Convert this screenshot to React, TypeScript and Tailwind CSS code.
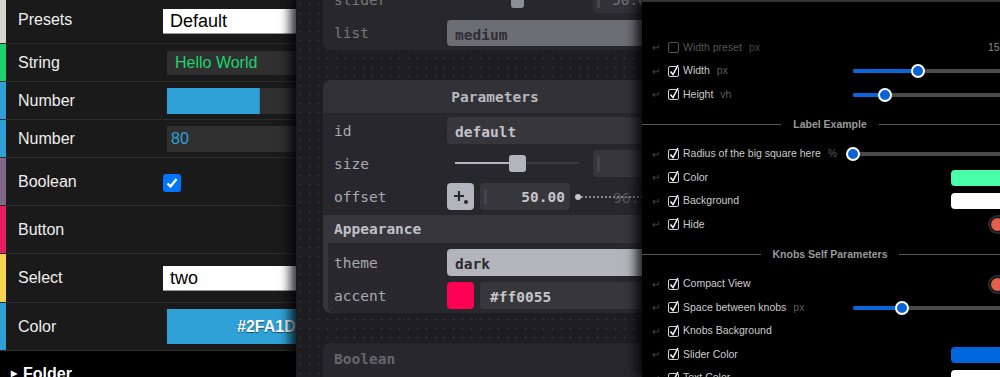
import React from "react";

function GuiRow(props: {
	strip: string;
	h: string;
	label: string;
	children?: React.ReactNode;
	extra?: string;
}) {
	return (
		<div className={`flex items-center border-b border-[#2c2c2c] ${props.h} ${props.extra ?? ""}`}>
			<div className={`self-stretch w-[6px] shrink-0 ${props.strip}`} />
			<div className="w-[157px] shrink-0 pl-[12px] text-[16px] text-[#eeeeee]">{props.label}</div>
			<div className="flex-1 flex items-center">{props.children}</div>
		</div>
	);
}

function DatGui() {
	return (
		<div className="w-[296px] shrink-0 h-full bg-[#1a1a1a] overflow-hidden font-['Liberation_Sans',Arial,sans-serif]">
			<GuiRow strip="bg-[#d6d6ce]" h="h-[47px]" extra="-mt-[3px]" label="Presets">
				<div className="w-[200px] h-[25px] mt-[2px] bg-white border-b border-[#999] pl-[7px] text-[18px] leading-[25px] text-black">
					Default
				</div>
			</GuiRow>
			<GuiRow strip="bg-[#1ed36f]" h="h-[38px]" label="String">
				<div className="ml-[4px] w-[200px] h-[24px] bg-[#303030] pl-[8px] text-[16px] leading-[24px] text-[#1ed36f]">
					Hello World
				</div>
			</GuiRow>
			<GuiRow strip="bg-[#2fa1d6]" h="h-[38px]" label="Number">
				<div className="ml-[4px] w-[200px] h-[26px] bg-[#303030] flex">
					<div className="w-[93px] h-full bg-[#2fa1d6] border-r border-[#2a89b8]" />
				</div>
			</GuiRow>
			<GuiRow strip="bg-[#2fa1d6]" h="h-[38px]" label="Number">
				<div className="ml-[4px] w-[200px] h-[26px] bg-[#303030] pl-[4px] text-[16px] leading-[26px] text-[#2fa1d6]">
					80
				</div>
			</GuiRow>
			<GuiRow strip="bg-[#806787]" h="h-[48px]" label="Boolean">
				<div className="w-[18px] h-[18px] mt-[2px] rounded-[3px] bg-[#0075ff] flex items-center justify-center">
					<svg width="14" height="14" viewBox="0 0 14 14">
						<path d="M2.5 7.5 L5.5 10.5 L11.5 3" fill="none" stroke="white" strokeWidth="2.4" />
					</svg>
				</div>
			</GuiRow>
			<GuiRow strip="bg-[#e61d5f]" h="h-[48px]" label="Button" />
			<GuiRow strip="bg-[#f4d450]" h="h-[49px]" label="Select">
				<div className="w-[200px] h-[25px] bg-white border-b border-[#999] pl-[7px] text-[18px] leading-[25px] text-black">
					two
				</div>
			</GuiRow>
			<GuiRow strip="bg-[#2fa1d6]" h="h-[48px]" label="Color">
				<div className="ml-[4px] w-[200px] h-[35px] bg-[#2fa1d6] pl-[70px] text-[16px] leading-[35px] font-bold text-white [text-shadow:0_1px_1px_rgba(0,0,0,0.5)]">
					#2FA1D6
				</div>
			</GuiRow>
			<div className="bg-black h-[40px] flex items-center pl-[11px] pt-[5px] text-[16px] font-bold text-white">
				<span className="text-[8px] mr-[6px]">▶</span>
				Folder
			</div>
		</div>
	);
}

function PaneRow(props: { label: string; dim?: boolean; children?: React.ReactNode }) {
	return (
		<div className="flex items-center h-[33px]">
			<div className={`w-[113px] shrink-0 pt-[3px] ${props.dim ? "text-[#77777d]" : "text-[#a8a8ae]"}`}>{props.label}</div>
			<div className="flex-1 flex items-center pr-[8px]">{props.children}</div>
		</div>
	);
}

function Handle() {
	return <div className="w-[3px] h-[16px] rounded-full bg-[#45454b] ml-[4px]" />;
}

function Pane() {
	return (
		<div className="relative z-10 w-[346px] shrink-0 h-full overflow-hidden bg-[#1e1e22] bg-[radial-gradient(circle,#34343a_0.8px,transparent_1.2px)] bg-[length:9px_9px] shadow-[-6px_0_10px_rgba(0,0,0,0.8)] font-['DejaVu_Sans_Mono',monospace] text-[14.5px]">
			<div className="pl-[27px] flex flex-col">
				{/* clipped top card */}
				<div className="w-[344px] -mt-[17px] pb-[1px] rounded-b-[8px] bg-[#28282c] pl-[11px]">
					<PaneRow label="slider" dim>
						<div className="relative w-[124px] h-[17px] ml-[8px]">
							<div className="absolute left-0 top-[7px] w-[62px] h-[2px] bg-[#8c8c92]" />
							<div className="absolute left-[62px] right-0 top-[7px] h-[2px] bg-[#38383e]" />
							<div className="absolute left-[56px] top-0 w-[13px] h-[17px] rounded-[3px] bg-[#8e8e95]" />
						</div>
						<div className="ml-[14px] flex-1 h-[27px] rounded-[4px] bg-[#313136] flex items-center text-[#77777d]">
							<Handle />
							<span className="ml-[12px] pt-[2px]">50.00</span>
						</div>
					</PaneRow>
					<PaneRow label="list" dim>
						<div className="flex-1 h-[26px] rounded-[4px] bg-[#6d6d74] pl-[8px] pt-[2px] leading-[26px] font-bold text-[#2e2e33]">
							medium
						</div>
					</PaneRow>
				</div>

				{/* Parameters card */}
				<div className="w-[344px] mt-[30px] rounded-[8px] bg-[#28282c] overflow-hidden">
					<div className="h-[33px] pt-[2px] bg-[#313136] flex items-center justify-center font-bold text-[#b8b8be]">
						Parameters
					</div>
					<div className="pt-[1px] pl-[11px]">
						<PaneRow label="id">
							<div className="flex-1 h-[27px] rounded-[4px] bg-[#36363b] pl-[8px] pt-[2px] leading-[27px] font-bold text-[#c4c4ca]">
								default
							</div>
						</PaneRow>
						<PaneRow label="size">
							<div className="relative w-[124px] h-[17px] ml-[8px]">
								<div className="absolute left-0 top-[7px] w-[62px] h-[2px] bg-[#b4b5bc]" />
								<div className="absolute left-[62px] right-0 top-[7px] h-[2px] bg-[#3c3c42]" />
								<div className="absolute left-[54px] top-0 w-[17px] h-[17px] rounded-[3px] bg-[#b4b5bc]" />
							</div>
							<div className="ml-[14px] flex-1 h-[27px] rounded-[4px] bg-[#36363b] flex items-center">
								<Handle />
							</div>
						</PaneRow>
						<PaneRow label="offset">
							<div className="w-[27px] h-[27px] rounded-[4px] bg-[#b4b5bc] flex items-center justify-center">
								<svg width="16" height="16" viewBox="0 0 16 16">
									<path d="M6 2 V12 M1 7 H11" stroke="#2a2a2e" strokeWidth="2.2" fill="none" />
									<circle cx="13" cy="13" r="2" fill="#2a2a2e" />
								</svg>
							</div>
							<div className="ml-[6px] w-[90px] h-[27px] rounded-[4px] bg-[#36363b] flex items-center">
								<Handle />
								<span className="ml-auto pr-[5px] pt-[2px] font-bold text-[#c4c4ca]">50.00</span>
							</div>
							<div className="ml-[5px] flex-1 flex items-center relative h-[27px]">
								<div className="w-[6px] h-[6px] rounded-full bg-[#c4c4ca] shrink-0" />
								<div className="flex-1 border-t-2 border-dotted border-[#8a8a90]" />
								<span className="absolute left-[38px] top-[5px] text-[#55555b]">96.</span>
							</div>
						</PaneRow>
					</div>
					<div className="mt-[2px] bg-[#36363b]">
						<div className="h-[28px] pl-[11px] pt-[2px] flex items-center font-bold text-[#c0c0c6]">Appearance</div>
						<div className="ml-[5px] bg-[#29292d] rounded-bl-[6px] pt-[3px] pb-[1px] pl-[6px]">
							<PaneRow label="theme">
								<div className="flex-1 h-[27px] rounded-[4px] bg-[#b4b5bb] pl-[8px] pt-[2px] leading-[27px] font-bold text-[#2a2a2e]">
									dark
								</div>
							</PaneRow>
							<PaneRow label="accent">
								<div className="w-[27px] h-[27px] rounded-[4px] bg-[#ff0055]" />
								<div className="ml-[6px] flex-1 h-[27px] rounded-[4px] bg-[#36363b] pl-[10px] pt-[2px] leading-[27px] font-bold text-[#c4c4ca]">
									#ff0055
								</div>
							</PaneRow>
						</div>
					</div>
				</div>

				{/* Boolean card */}
				<div className="w-[344px] mt-[30px] h-[60px] rounded-t-[8px] bg-[#28282c] pl-[11px]">
					<div className="h-[30px] pt-[3px] flex items-center font-bold text-[#66666c]">Boolean</div>
				</div>
			</div>
		</div>
	);
}

function Check(props: { on: boolean }) {
	return (
		<div className={`relative w-[11px] h-[11px] shrink-0 rounded-[2px] border ${props.on ? "border-[#d0d0d0]" : "border-[#555]"}`}>
			{props.on && (
				<svg className="absolute -left-[1px] -top-[3px] overflow-visible" width="12" height="13" viewBox="0 0 12 13">
					<path d="M2.5 7.5 L5 10.5 L10 1" fill="none" stroke="#eeeeee" strokeWidth="1.6" />
				</svg>
			)}
		</div>
	);
}

function KRow(props: {
	label: string;
	unit?: string;
	on?: boolean;
	children?: React.ReactNode;
}) {
	const on = props.on ?? true;
	return (
		<div className="flex items-center h-[23.5px]">
			<span className="w-[26px] shrink-0 pl-[10px] text-[10px] text-[#4a4a4a]">↵</span>
			<Check on={on} />
			<span className={`ml-[4px] whitespace-nowrap ${on ? "text-[#cccccc]" : "text-[#555555]"}`}>{props.label}</span>
			{props.unit && <span className={`ml-[7px] ${on ? "text-[#5a5a5a]" : "text-[#444444]"}`}>{props.unit}</span>}
			<div className="ml-auto w-[157px] shrink-0 flex items-center">{props.children}</div>
		</div>
	);
}

function Slider(props: { at: number }) {
	return (
		<div className="relative w-full h-[14px]">
			<div className="absolute left-0 right-0 top-[5px] h-[4px] rounded-full bg-[#4a4a4a]" />
			<div className="absolute left-0 top-[5px] h-[4px] rounded-full bg-[#0a66da]" style={{ width: props.at }} />
			<div
				className="absolute top-0 w-[14px] h-[14px] rounded-full border-2 border-white bg-[#0a63d4]"
				style={{ left: props.at - 7 }}
			/>
		</div>
	);
}

function Swatch(props: { color: string }) {
	return <div className={`ml-[98px] flex-1 h-[16px] rounded-[4px] ${props.color}`} />;
}

function Toggle() {
	return (
		<div className="ml-[135px] w-[40px] h-[19px] shrink-0 rounded-full border-2 border-[#2a2a2a] bg-[#111] flex items-center p-[1px]">
			<div className="w-[13px] h-[13px] rounded-full bg-[#e0604c]" />
		</div>
	);
}

function Divider(props: { label: string }) {
	return (
		<div className="flex items-center h-[36px] -mr-[8px]">
			<div className="flex-1 h-px bg-[#555]" />
			<span className="px-[12px] font-bold text-[#999]">{props.label}</span>
			<div className="flex-1 h-px bg-[#555]" />
		</div>
	);
}

function Knobs() {
	return (
		<div className="relative z-20 w-[376px] shrink-0 h-full bg-black border-t-2 border-[#333] pr-[8px] pt-[34px] shadow-[-6px_0_10px_rgba(0,0,0,0.8)] font-['Liberation_Sans',Arial,sans-serif] text-[10.5px] overflow-hidden">
			<KRow label="Width preset" unit="px" on={false}>
				<span className="pl-[135px] text-[#888]">150</span>
			</KRow>
			<KRow label="Width" unit="px">
				<Slider at={65} />
			</KRow>
			<KRow label="Height" unit="vh">
				<Slider at={32} />
			</KRow>
			<Divider label="Label Example" />
			<KRow label="Radius of the big square here" unit="%">
				<Slider at={0} />
			</KRow>
			<KRow label="Color">
				<Swatch color="bg-[#4affaa]" />
			</KRow>
			<KRow label="Background">
				<Swatch color="bg-white" />
			</KRow>
			<KRow label="Hide">
				<Toggle />
			</KRow>
			<Divider label="Knobs Self Parameters" />
			<KRow label="Compact View">
				<Toggle />
			</KRow>
			<KRow label="Space between knobs" unit="px">
				<Slider at={49} />
			</KRow>
			<KRow label="Knobs Background" />
			<KRow label="Slider Color">
				<Swatch color="bg-[#0066dd]" />
			</KRow>
			<KRow label="Text Color">
				<Swatch color="bg-white" />
			</KRow>
		</div>
	);
}

export default function App() {
	return (
		<div className="flex w-[1000px] h-[377px] overflow-hidden bg-black">
			<DatGui />
			<Pane />
			<Knobs />
		</div>
	);
}
